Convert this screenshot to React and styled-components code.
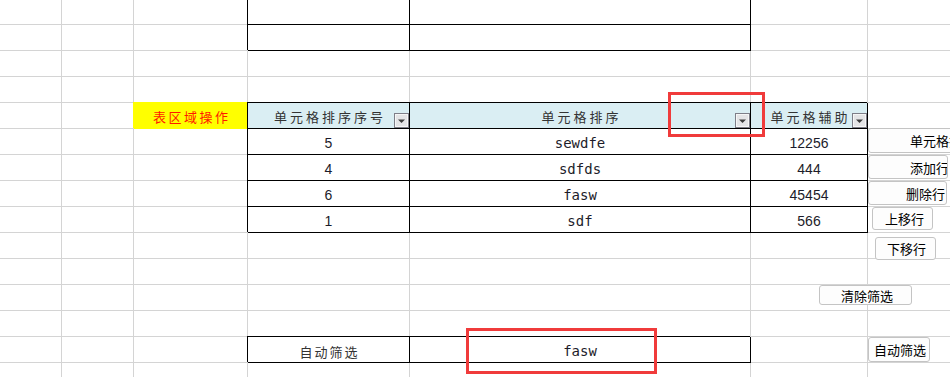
import React from 'react';
import styled, { createGlobalStyle } from 'styled-components';

const Global = createGlobalStyle`
  html, body { margin: 0; padding: 0; background: #fff; overflow: hidden; }
  body { font-family: "Noto Sans CJK SC", sans-serif; }
`;

const GRID = '#d4d4d4';

const Sheet = styled.div`
  position: relative;
  width: 950px;
  height: 377px;
  overflow: hidden;
  background: #fff;
`;

const Grid = styled.div`
  display: grid;
  grid-template-columns: 62px 72px 114px 162px 341px 117px 120px;
  grid-template-rows: 25px repeat(14, 26px);
`;

const fills = { plain: '#fff', box: '#fff', head: '#daeef3', tag: '#ffff00' };
const edges = { plain: GRID, box: '#000', head: '#000', tag: '#ffff00' };
const shadows = {
  plain: 'none',
  box: '-1px -1px 0 #000',
  head: '-1px -1px 0 #000',
  tag: '-1px -1px 0 #ffff00',
};

const Cell = styled.div`
  position: relative;
  box-sizing: border-box;
  display: flex;
  align-items: center;
  justify-content: center;
  padding-top: ${(p) => (p.$kind === 'box' ? 3 : 1)}px;
  background: ${(p) => fills[p.$kind]};
  border-right: 1px solid ${(p) => edges[p.$kind]};
  border-bottom: 1px solid ${(p) => edges[p.$kind]};
  box-shadow: ${(p) => shadows[p.$kind]};
  white-space: nowrap;
`;

const HeadText = styled.span`
  font-family: "Noto Sans CJK SC", sans-serif;
  font-size: 13px;
  line-height: 1;
  letter-spacing: ${(p) => p.$spacing ?? 3}px;
  color: ${(p) => p.$color || '#333'};
  margin-right: ${(p) => -(p.$spacing ?? 3)}px;
`;

const NumText = styled.span`
  font-family: "Liberation Sans", Arial, sans-serif;
  font-size: 14px;
  line-height: 1;
  color: #1c1c2a;
`;

const MonoText = styled.span`
  font-family: "DejaVu Sans Mono", "Liberation Mono", monospace;
  font-size: 14px;
  line-height: 1;
  color: #1c1c2a;
`;

const FilterButton = styled.svg`
  position: absolute;
  right: 0;
  bottom: 0;
  width: 15px;
  height: 15px;
  display: block;
`;

const Filter = () => (
  <FilterButton viewBox="0 0 15 15">
    <rect x="0.5" y="0.5" width="14" height="14" fill="#e4e4e6" stroke="#7e7e88" />
    <rect x="1.5" y="1.5" width="12" height="12" fill="none" stroke="#f6f6f6" />
    <polygon points="4,6.5 11,6.5 7.5,10" fill="#3c3c3c" />
  </FilterButton>
);

const FormButton = styled.div`
  position: absolute;
  left: ${(p) => p.$x}px;
  top: ${(p) => p.$y}px;
  width: ${(p) => p.$w}px;
  height: ${(p) => p.$h}px;
  box-sizing: border-box;
  display: flex;
  align-items: center;
  padding-left: ${(p) => p.$pad}px;
  border: 1px solid #c4c4c4;
  border-radius: 3px;
  background: #fdfdfd;
  font-family: "Noto Sans CJK SC", sans-serif;
  font-size: 13px;
  line-height: 1;
  color: #000;
  white-space: nowrap;
  overflow: hidden;
`;

const Marker = styled.div`
  position: absolute;
  left: ${(p) => p.$x}px;
  top: ${(p) => p.$y}px;
  width: ${(p) => p.$w}px;
  height: ${(p) => p.$h}px;
  box-sizing: border-box;
  border: 3px solid #f03b3b;
  pointer-events: none;
`;

const P = { kind: 'plain' };
const B = { kind: 'box' };
const plainRow = [P, P, P, P, P, P, P];

const head = (text) => ({ kind: 'head', content: <HeadText>{text}</HeadText>, filter: true });
const num = (v) => ({ kind: 'box', content: <NumText>{v}</NumText> });
const mono = (v) => ({ kind: 'box', content: <MonoText>{v}</MonoText> });

const data = [
  ['5', 'sewdfe', '12256'],
  ['4', 'sdfds', '444'],
  ['6', 'fasw', '45454'],
  ['1', 'sdf', '566'],
];

const rows = [
  [P, P, P, B, B, P, P],
  [P, P, P, B, B, P, P],
  plainRow,
  plainRow,
  [
    P,
    P,
    { kind: 'tag', content: <HeadText $color="#ff1a00" $spacing={2.5}>表区域操作</HeadText> },
    head('单元格排序序号'),
    head('单元格排序'),
    head('单元格辅助'),
    P,
  ],
  ...data.map(([a, b, c]) => [P, P, P, num(a), mono(b), num(c), P]),
  plainRow,
  plainRow,
  plainRow,
  plainRow,
  [
    P,
    P,
    P,
    { kind: 'box', content: <HeadText $spacing={2}>自动筛选</HeadText> },
    mono('fasw'),
    P,
    P,
  ],
  plainRow,
];

const buttons = [
  { label: '单元格排序', x: 868, y: 128, w: 100, h: 25, pad: 41 },
  { label: '添加行', x: 868, y: 155, w: 80, h: 24, pad: 41 },
  { label: '删除行', x: 868, y: 181, w: 79, h: 24, pad: 37 },
  { label: '上移行', x: 872, y: 207, w: 61, h: 23, pad: 12 },
  { label: '下移行', x: 875, y: 237, w: 61, h: 23, pad: 11 },
  { label: '清除筛选', x: 819, y: 285, w: 93, h: 20, pad: 21 },
  { label: '自动筛选', x: 868, y: 337, w: 62, h: 25, pad: 5 },
];

export default function App() {
  return (
    <Sheet>
      <Global />
      <Grid>
        {rows.map((row, r) =>
          row.map((cell, c) => (
            <Cell key={`${r}-${c}`} $kind={cell.kind}>
              {cell.content}
              {cell.filter && <Filter />}
            </Cell>
          ))
        )}
      </Grid>
      {buttons.map((b) => (
        <FormButton key={b.label} $x={b.x} $y={b.y} $w={b.w} $h={b.h} $pad={b.pad}>
          {b.label}
        </FormButton>
      ))}
      <Marker $x={668} $y={92} $w={97} $h={45} />
      <Marker $x={466} $y={328} $w={191} $h={46} />
    </Sheet>
  );
}
